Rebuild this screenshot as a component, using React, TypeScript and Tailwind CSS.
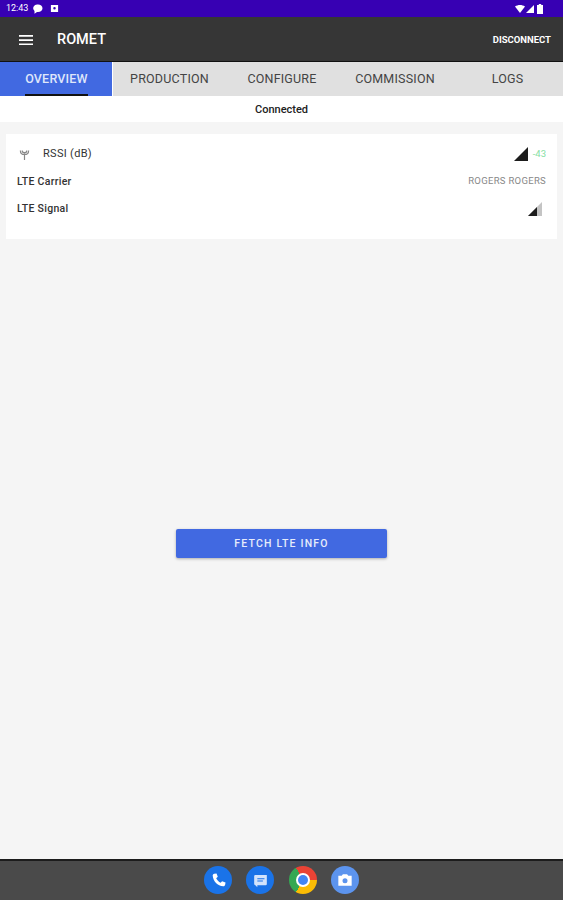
import React from 'react';

const TABS = [
  { label: 'PRODUCTION', cls: 'w-[113px]' },
  { label: 'CONFIGURE', cls: 'w-[112px]' },
  { label: 'COMMISSION', cls: 'w-[114px]' },
  { label: 'LOGS', cls: 'flex-1' },
];

function Signal({ className }: { className: string }) {
  return (
    <svg viewBox="0 0 14 14" className={className}>
      <path d="M0 14 L14 0 V14 Z" fill="#1c1c1c" />
    </svg>
  );
}

function StatusBar() {
  return (
    <div className="flex h-[17px] items-center bg-[#3700b3] pl-[6px] pr-[20px] text-white">
      <span className="text-[9px] leading-none">12:43</span>
      <svg viewBox="0 0 10 10" className="ml-[5px] h-[10px] w-[10px]">
        <path d="M5 0.5a4.5 3.8 0 0 1 0 7.6H4L1.5 9.7V7A4 3.8 0 0 1 5 .5Z" fill="white" />
      </svg>
      <svg viewBox="0 0 10 10" className="ml-[7px] h-[9px] w-[9px]">
        <path d="M1 1h8v8H1Z M3.6 4.6a1.4 1.4 0 1 0 2.8 0a1.4 1.4 0 1 0-2.8 0Z" fill="white" fillRule="evenodd" />
      </svg>
      <div className="flex-1" />
      <svg viewBox="0 0 10 8" className="h-[8px] w-[10px]">
        <path d="M0 1.5C3 -.5 7 -.5 10 1.5L5 8Z" fill="white" />
      </svg>
      <svg viewBox="0 0 8 8" className="ml-[1px] h-[8px] w-[8px]">
        <path d="M0 8 L8 0 V8 Z" fill="white" />
      </svg>
      <svg viewBox="0 0 6 10" className="ml-[3px] h-[10px] w-[6px]">
        <path d="M1.8 0h2.4v1H6v9H0V1h1.8Z" fill="white" />
      </svg>
    </div>
  );
}

function Dock() {
  return (
    <div className="flex h-[41px] items-center justify-center gap-[14.300px] border-t-2 border-[#1c1c1c] bg-[#4a4a4a] pb-[1px]">
      <div className="flex h-[28px] w-[28px] items-center justify-center rounded-full bg-[#1a73e8]">
        <svg viewBox="0 0 24 24" className="h-[19px] w-[19px]">
          <path d="M6.6 3.5 9.5 3l1.6 4.4-2 1.8c.9 2.3 3.2 4.6 5.6 5.6l1.8-2 4.4 1.6-.5 2.9c-.2 1.2-1.2 2-2.4 1.9C10.700 18.600 5.400 13.300 4.700 5.900c-.1-1.200.7-2.200 1.900-2.400Z" fill="white" />
        </svg>
      </div>
      <div className="flex h-[28px] w-[28px] items-center justify-center rounded-full bg-[#1a73e8]">
        <svg viewBox="0 0 24 24" className="h-[19px] w-[19px]">
          <path d="M5 5h15v11.500a1.500 1.500 0 0 1-1.500 1.500H8v2.500L5.500 18A2 2 0 0 1 4 16V6Z" fill="#d2e3fc" />
          <path d="M8 9h9v1.300H8Zm0 3h7v1.300H8Z" fill="#1a73e8" />
        </svg>
      </div>
      <div className="flex h-[28px] w-[28px] items-center justify-center rounded-full bg-[conic-gradient(from_-30deg,#ea4335_0deg_120deg,#fbbc04_120deg_240deg,#34a853_240deg_360deg)]">
        <div className="flex h-[14px] w-[14px] items-center justify-center rounded-full bg-white">
          <div className="h-[10px] w-[10px] rounded-full bg-[#4285f4]" />
        </div>
      </div>
      <div className="flex h-[28px] w-[28px] items-center justify-center rounded-full bg-[#5c94ee]">
        <svg viewBox="0 0 24 24" className="h-[20px] w-[20px]">
          <path d="M4 7h4l1.500-2h5L16 7h4v12H4Zm8 3a3 3 0 1 0 0 6a3 3 0 1 0 0-6Z" fill="white" fillRule="evenodd" />
        </svg>
      </div>
    </div>
  );
}

export default function App() {
  return (
    <div className="flex h-[900px] w-[563px] flex-col overflow-hidden bg-[#f5f5f5] font-['Roboto',sans-serif]">
      <StatusBar />

      <div className="flex h-[45px] items-center border-b-[1px] border-[#111] bg-[#363636] pl-[19px] pr-[12px] pt-[2px] text-white">
        <svg viewBox="0 0 14 12" className="h-[12px] w-[14px]">
          <path d="M0 1h14v1.700H0Zm0 4.200h14v1.700H0Zm0 4.200h14v1.700H0Z" fill="white" />
        </svg>
        <span className="ml-[24px] text-[14.500px] font-medium">ROMET</span>
        <span className="ml-auto text-[9.500px] font-bold">DISCONNECT</span>
      </div>

      <div className="flex h-[34px] bg-[#e0e0e0] text-[12.500px] tracking-[0.2px] text-[#444]">
        <div className="flex w-[113px] items-center justify-center border-r-[1px] border-white bg-[#4169e1] pl-[1px] font-medium text-[#dfe6fa]">
          <span className="relative">
            OVERVIEW
            <span className="absolute -bottom-[8px] left-0 right-0 h-[2px] bg-[#111]" />
          </span>
        </div>
        {TABS.map((t) => (
          <div key={t.label} className={`flex items-center justify-center ${t.cls}`}>
            {t.label}
          </div>
        ))}
      </div>

      <div className="flex h-[26px] items-center justify-center bg-white pt-[3px] text-[11px] font-medium text-[#222]">
        Connected
      </div>

      <div className="mx-[6px] mt-[12px] h-[105px] bg-white px-[11px] text-[10.500px] tracking-[0.3px] text-[#333]">
        <div className="flex h-[38px] items-center pt-[2px]">
          <svg viewBox="0 0 12 12" className="ml-[2px] h-[11px] w-[11px]" stroke="#888" strokeWidth="1.300" fill="none">
            <path d="M6 5v7M1.500 1.500c0 3 2 4.500 4.500 4.500s4.500-1.500 4.500-4.500M3.500 1.500c0 1.500 1 2.500 2.500 2.500s2.500-1 2.500-2.500" />
          </svg>
          <span className="ml-[13px] text-[11px]">RSSI (dB)</span>
          <Signal className="ml-auto h-[14px] w-[14px]" />
          <span className="ml-[5px] text-[9.500px] tracking-normal text-[#86e0a4]">-43</span>
        </div>
        <div className="mt-[1px] flex h-[17px] items-center font-medium">
          LTE Carrier
          <span className="ml-auto text-[9.500px] font-normal text-[#888]">ROGERS ROGERS</span>
        </div>
        <div className="mt-[10px] flex h-[17px] items-center font-medium">
          LTE Signal
          <svg viewBox="0 0 14 14" className="ml-auto mr-[4px] h-[14px] w-[14px]">
            <path d="M0 14 L14 0 V14 Z" fill="#c4c4c4" />
            <path d="M0 14 L9 5 V14 Z" fill="#1c1c1c" />
          </svg>
        </div>
      </div>

      <div className="flex flex-1 items-center justify-center pb-[11px]">
        <button className="flex h-[29px] w-[211px] items-center justify-center rounded-[2px] bg-[#4169e1] text-[10.500px] font-medium tracking-[1.200px] text-[#e6ecfb] shadow-[0_1px_3px_rgba(0,0,0,0.3)]">
          FETCH LTE INFO
        </button>
      </div>

      <Dock />
    </div>
  );
}
